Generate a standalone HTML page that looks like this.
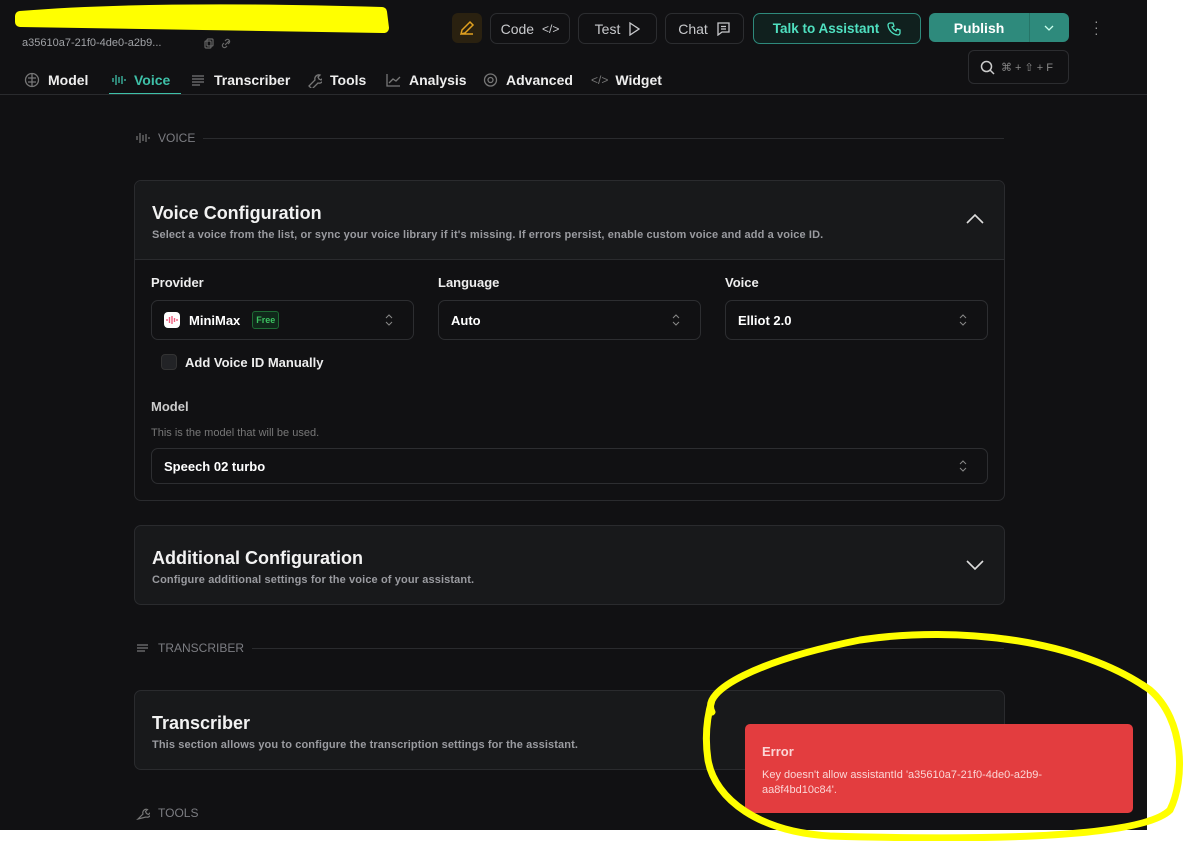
<!DOCTYPE html>
<html><head><meta charset="utf-8"><style>
*{box-sizing:border-box;margin:0;padding:0}
body{width:1187px;height:841px;background:#fff;font-family:"Liberation Sans",sans-serif;position:relative;overflow:hidden;color:#fff}
#app{position:absolute;left:0;top:0;width:1147px;height:830px;background:#111113;overflow:hidden}
.abs{position:absolute}
.btn{position:absolute;top:13px;height:31px;border:1px solid #2c2d30;border-radius:7px;color:#c8c9cc;font-size:14px;display:flex;align-items:center;justify-content:center;gap:8px}
.tab{position:absolute;top:72px;font-size:14px;font-weight:bold;color:#eee;display:flex;align-items:center;gap:8px}
.tab svg{stroke:#777;fill:none;stroke-width:1.3}
.card{position:absolute;left:134px;width:871px;border:1px solid #2a2b2e;border-radius:7px;background:#18191b}
.ct{position:absolute;left:17px;font-size:18px;font-weight:bold;color:#f2f2f2}
.cs{position:absolute;left:17px;font-size:11px;font-weight:bold;color:#9a9ba0;letter-spacing:0.12px}
.lbl{position:absolute;font-size:13px;font-weight:bold;color:#eee}
.sel{position:absolute;height:40px;border:1px solid #2d2e31;border-radius:7px;font-size:13px;font-weight:bold;color:#fff;display:flex;align-items:center;padding-left:12px}
.sel .ar{position:absolute;right:20px;top:13px}
.sec{position:absolute;left:136px;width:868px;font-size:12px;color:#7c7d82;display:flex;align-items:center;gap:8px}
.sec .ln{flex:1;height:1px;background:#2a2b2e}
</style></head><body>
<div id="app">
<div class="abs" style="left:22px;top:37px;font-size:11px;color:#a0a2a6">a35610a7-21f0-4de0-a2b9...</div>
<svg class="abs" style="left:204px;top:38px" width="30" height="11" fill="none" stroke="#666" stroke-width="1.2"><rect x="1" y="3" width="6" height="7" rx="1"/><rect x="3" y="1" width="6" height="7" rx="1"/><path d="M21 7l4-4M20 5l-1 1a2 2 0 003 3l1-1M24 6l1-1a2 2 0 00-3-3l-1 1"/></svg>
<div class="abs" style="left:452px;top:13px;width:30px;height:30px;background:#2a2110;border-radius:6px"><svg width="30" height="30" fill="none" stroke="#e0a020" stroke-width="1.5"><path d="M9 21l1-4 8-8 3 3-8 8z M9 21h12"/></svg></div>
<div class="btn" style="left:490px;width:80px">Code <span style="font-size:12px">&lt;/&gt;</span></div>
<div class="btn" style="left:578px;width:79px">Test <svg width="12" height="14" fill="none" stroke="#c8c9cc" stroke-width="1.3"><path d="M2 1l9 6-9 6z"/></svg></div>
<div class="btn" style="left:665px;width:79px">Chat <svg width="15" height="15" fill="none" stroke="#c8c9cc" stroke-width="1.3"><path d="M2 2h11v9H6l-4 3z M5 5.5h5M5 8h5"/></svg></div>
<div class="btn" style="left:753px;width:168px;border-color:#2e8a7c;background:#10201e;color:#4fe0c0;font-weight:bold;font-size:13.5px">Talk to Assistant <svg width="14" height="14" fill="none" stroke="#4fe0c0" stroke-width="1.3"><path d="M3 1h3l1 3-2 1a8 8 0 004 4l1-2 3 1v3c0 1-1 2-2 2A11 11 0 011 3c0-1 1-2 2-2z"/></svg></div>
<div class="abs" style="left:929px;top:13px;width:140px;height:29px;background:#2e8a7c;border-radius:6px;font-size:14px;font-weight:bold;display:flex;align-items:center"><span style="width:100px;text-align:center">Publish</span><span style="width:1px;height:29px;background:#267568"></span><svg style="margin-left:13px" width="12" height="8" fill="none" stroke="#cfe" stroke-width="1.3"><path d="M2 2l4 4 4-4"/></svg></div>
<div class="abs" style="left:1094px;top:18px;color:#999;font-size:14px;line-height:6px">·<br>·<br>·</div>
<div class="abs" style="left:968px;top:50px;width:101px;height:34px;border:1px solid #2c2d30;border-radius:6px;display:flex;align-items:center;padding-left:11px;gap:6px;color:#888;font-size:11px"><svg width="15" height="15" fill="none" stroke="#ccc" stroke-width="1.5"><circle cx="6.5" cy="6.5" r="5"/><path d="M10 10l4 4"/></svg>⌘ + ⇧ + F</div>

<div class="tab" style="left:24px"><svg width="16" height="16"><circle cx="8" cy="8" r="6.5"/><path d="M8 2v12M4 6h8M4 10h8"/></svg>Model</div>
<div class="tab" style="left:111px;color:#3ec0a8"><svg width="15" height="16" style="stroke:#3ec0a8"><path d="M2 6v4M5 3v10M8 5v6M11 4v8M14 7v2"/></svg>Voice</div>
<div class="abs" style="left:109px;top:93px;width:72px;height:2px;background:#3ec0a8"></div>
<div class="tab" style="left:191px"><svg width="15" height="16"><path d="M1 4h12M1 7h12M1 10h12M1 13h8"/></svg>Transcriber</div>
<div class="tab" style="left:307px"><svg width="15" height="16"><path d="M2 14l6-6a4 4 0 015-5l-2 2 1 2 2 1 2-2a4 4 0 01-5 5l-6 6z"/></svg>Tools</div>
<div class="tab" style="left:386px"><svg width="15" height="16"><path d="M1 2v12h13M3 11l4-4 3 2 4-4"/></svg>Analysis</div>
<div class="tab" style="left:483px"><svg width="15" height="16"><circle cx="7.5" cy="8" r="2.5"/><circle cx="7.5" cy="8" r="6"/></svg>Advanced</div>
<div class="tab" style="left:591px;gap:7px"><span style="color:#777;font-size:12px;font-weight:normal">&lt;/&gt;</span>Widget</div>
<div class="abs" style="left:0;top:94px;width:1147px;height:1px;background:#2a2b2e"></div>

<div class="sec" style="top:131px"><svg width="14" height="12" fill="none" stroke="#777" stroke-width="1.2"><path d="M1 4v4M4 1v10M7 3v6M10 2v8M13 5v2"/></svg>VOICE<span class="ln"></span></div>

<div class="card" style="top:180px;height:321px;background:#111113;overflow:hidden">
 <div class="abs" style="left:0;top:0;width:871px;height:79px;background:#18191b;border-bottom:1px solid #2a2b2e"></div>
 <div class="ct" style="top:22px">Voice Configuration</div>
 <div class="cs" style="top:48px">Select a voice from the list, or sync your voice library if it's missing. If errors persist, enable custom voice and add a voice ID.</div>
 <svg class="abs" style="left:830px;top:31px" width="20" height="12" fill="none" stroke="#ddd" stroke-width="1.6"><path d="M2 11l8-8 8 8"/></svg>
 <div class="lbl" style="left:16px;top:94px">Provider</div>
 <div class="lbl" style="left:303px;top:94px">Language</div>
 <div class="lbl" style="left:590px;top:94px">Voice</div>
</div>
<div class="sel" style="left:151px;top:300px;width:263px"><span style="width:16px;height:16px;background:#fff;border-radius:4px;display:inline-flex;align-items:center;justify-content:center;margin-right:9px"><svg width="12" height="10" fill="none" stroke="#f06080" stroke-width="1.4"><path d="M1 4v2M3.5 2v6M6 1v8M8.5 3v4M11 4v2"/></svg></span>MiniMax<span style="margin-left:12px;border:1px solid #1e6a34;background:#10281a;color:#3cc060;font-size:9px;padding:3px 3px;border-radius:3px">Free</span><svg class="ar" width="8" height="12" fill="none" stroke="#888"><path d="M1 4l3-3 3 3M1 8l3 3 3-3"/></svg></div>
<div class="sel" style="left:438px;top:300px;width:263px">Auto<svg class="ar" width="8" height="12" fill="none" stroke="#888"><path d="M1 4l3-3 3 3M1 8l3 3 3-3"/></svg></div>
<div class="sel" style="left:725px;top:300px;width:263px">Elliot 2.0<svg class="ar" width="8" height="12" fill="none" stroke="#888"><path d="M1 4l3-3 3 3M1 8l3 3 3-3"/></svg></div>
<div class="abs" style="left:161px;top:354px;width:16px;height:16px;border-radius:4px;background:#222326;border:1px solid #333"></div>
<div class="lbl" style="left:185px;top:355px">Add Voice ID Manually</div>
<div class="lbl" style="left:151px;top:399px;color:#ccc">Model</div>
<div class="abs" style="left:151px;top:427px;font-size:11px;color:#777">This is the model that will be used.</div>
<div class="sel" style="left:151px;top:448px;width:837px;height:36px">Speech 02 turbo<svg class="ar" style="top:11px" width="8" height="12" fill="none" stroke="#888"><path d="M1 4l3-3 3 3M1 8l3 3 3-3"/></svg></div>

<div class="card" style="top:525px;height:80px">
 <div class="ct" style="top:22px">Additional Configuration</div>
 <div class="cs" style="top:48px">Configure additional settings for the voice of your assistant.</div>
 <svg class="abs" style="left:830px;top:33px" width="20" height="12" fill="none" stroke="#ddd" stroke-width="1.6"><path d="M2 2l8 8 8-8"/></svg>
</div>

<div class="sec" style="top:641px"><svg width="14" height="12" fill="none" stroke="#777" stroke-width="1.2"><path d="M1 3h11M1 6h11M1 9h8"/></svg>TRANSCRIBER<span class="ln"></span></div>

<div class="card" style="top:690px;height:80px">
 <div class="ct" style="top:22px">Transcriber</div>
 <div class="cs" style="top:48px">This section allows you to configure the transcription settings for the assistant.</div>
</div>

<div class="sec" style="top:806px"><svg width="14" height="14" fill="none" stroke="#777" stroke-width="1.2"><path d="M2 13l5-5a3.5 3.5 0 014.5-4.5l-2 2 1 2 2 1 2-2A3.5 3.5 0 0110 11z"/></svg>TOOLS</div>

<div class="abs" style="left:745px;top:724px;width:388px;height:89px;background:#e33d3f;border-radius:5px">
 <div class="abs" style="left:17px;top:20px;font-size:13px;font-weight:bold;color:#fbd6d6">Error</div>
 <div class="abs" style="left:17px;top:44px;width:340px;font-size:11px;line-height:15px;color:#fbd6d6">Key doesn't allow assistantId 'a35610a7-21f0-4de0-a2b9-aa8f4bd10c84'.</div>
</div>
</div>
<svg class="abs" style="left:0;top:0" width="1187" height="841" fill="none" stroke="#ffff00" stroke-linecap="round" stroke-linejoin="round">
 <path d="M20 16C120 8 250 8 382 12L384 28C250 26 120 24 20 22Z" fill="#ffff00" stroke-width="10"/>
 <path d="M712 712C700 690 760 660 860 640C960 625 1080 640 1150 690C1185 720 1185 780 1170 810C1140 840 960 840 830 836C760 832 715 800 708 760C705 740 706 720 712 700" stroke-width="7"/>
</svg>
</body></html>
